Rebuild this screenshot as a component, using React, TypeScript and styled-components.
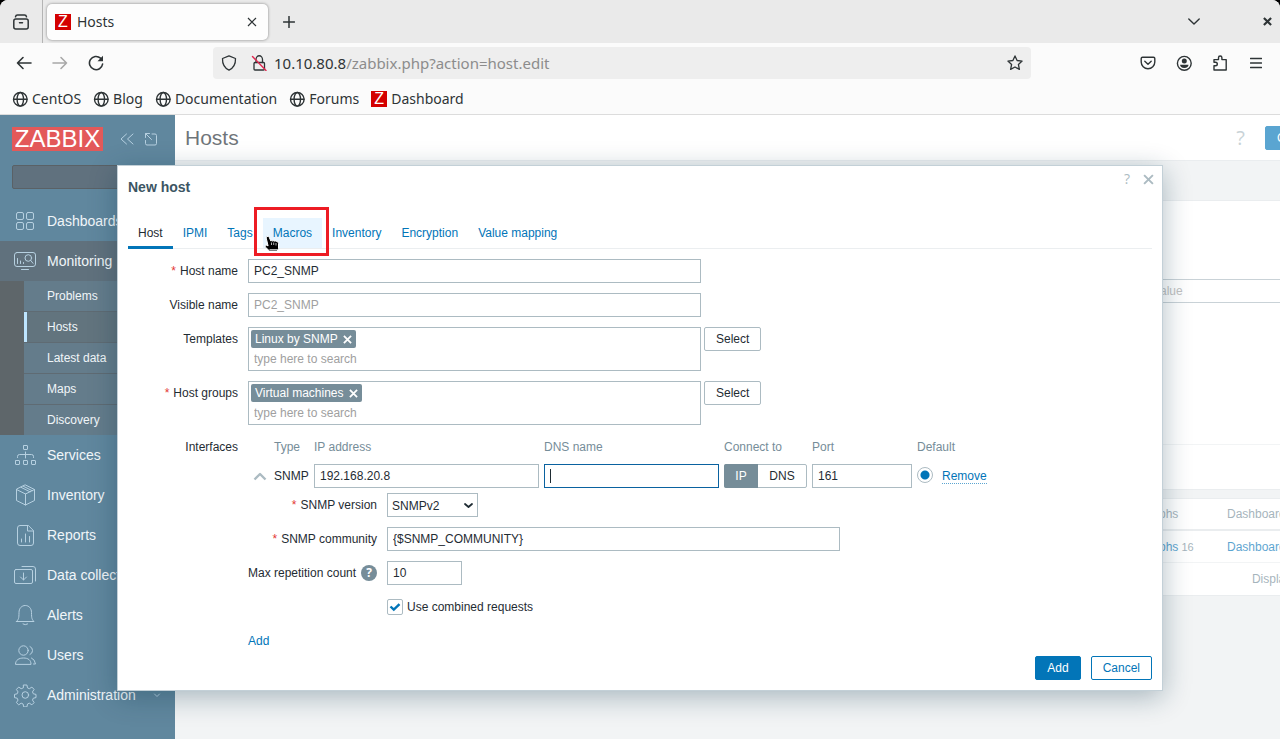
import React from "react";
import styled, { createGlobalStyle, css } from "styled-components";

const GlobalStyle = createGlobalStyle`
  *, *::before, *::after { box-sizing: border-box; }
  body { margin: 0; background: #000; }
  button, input, select { font: inherit; color: inherit; margin: 0; }
  h1, h2, ul, p { margin: 0; padding: 0; }
  ul { list-style: none; }
  a { text-decoration: none; }
`;

/* ---------- browser window ---------- */

const BrowserWindow = styled.div`
  display: flex;
  flex-direction: column;
  min-height: 100vh;
  overflow: hidden;
  border-radius: 8px 8px 0 0;
  background: #fbfbfb;
  color: #2e3436;
  font-family: "Noto Sans", sans-serif;
  font-size: 14px;
`;

const TabStrip = styled.div`
  display: flex;
  align-items: center;
  height: 43px;
  background: #eaeaea;
`;

const StripButton = styled.button<{ $width: number }>`
  display: flex;
  align-items: center;
  justify-content: center;
  flex: none;
  width: ${(p) => p.$width}px;
  height: 32px;
  padding: 0;
  border: 0;
  background: none;
`;

const StripDivider = styled.div`
  width: 1px;
  height: 43px;
  background: #b4b4b4;
`;

const BrowserTab = styled.div`
  display: flex;
  align-items: center;
  gap: 6px;
  width: 221px;
  height: 36px;
  margin: 0 4px;
  padding-left: 8px;
  border-radius: 5px;
  background: #fdfdfd;
  box-shadow: 0 0 3px rgba(0, 0, 0, 0.45);
`;

const TabTitle = styled.span`
  flex: 1;
`;

const Spacer = styled.div`
  flex: 1;
`;

const WindowGap = styled.div`
  width: 40px;
`;

const Favicon = styled.span`
  display: inline-flex;
  align-items: center;
  justify-content: center;
  width: 16px;
  height: 16px;
  background: #d40000;
  color: #fff;
  font: 16px/16px "Liberation Sans", sans-serif;
`;

const Toolbar = styled.div`
  display: flex;
  align-items: center;
  height: 40px;
  padding: 0 6px;
`;

const NavButtons = styled.div`
  display: flex;
  width: 207px;
`;

const AddressBar = styled.div`
  display: flex;
  align-items: center;
  flex: 1;
  height: 32px;
  border-radius: 4px;
  background: #eee;
`;

const Address = styled.div`
  flex: 1;
  padding-left: 2px;
  font-size: 15px;
  color: #8c8c8c;
`;

const AddressHost = styled.span`
  color: #2e3436;
`;

const ToolbarActions = styled.div`
  display: flex;
  justify-content: flex-end;
  width: 243px;
`;

const Bookmarks = styled.nav`
  display: flex;
  align-items: center;
  gap: 12px;
  height: 32px;
  padding: 0 12px;
  border-bottom: 1px solid #dcdcdc;
`;

const Bookmark = styled.a`
  display: flex;
  align-items: center;
  gap: 4px;
  color: #2e3436;
`;

/* ---------- page ---------- */

const Page = styled.div`
  position: relative;
  display: flex;
  flex: 1;
  overflow: hidden;
  background: #ebeef0;
  color: #1f2c33;
  font: 12px/24px "Liberation Sans", Arial, sans-serif;
`;

const Sidebar = styled.aside`
  flex: none;
  width: 175px;
  background: #0c476b;
  color: #fff;
`;

const SidebarHead = styled.div`
  display: flex;
  align-items: center;
  padding: 12px 12px 14px;
`;

const Logo = styled.a`
  flex: none;
  width: 91px;
  height: 24px;
  margin-right: 17px;
  background: #d40000;
  color: #fff;
  font-size: 24px;
  text-align: center;
`;

const HeadIcon = styled.button`
  display: flex;
  flex: none;
  width: 14px;
  height: 14px;
  margin-right: 10px;
  padding: 0;
  border: 0;
  background: none;
  color: #8fb7d0;
`;

const SideSearch = styled.input`
  display: block;
  width: 151px;
  height: 24px;
  margin: 0 12px 12px;
  border: 1px solid #020d14;
  border-radius: 2px;
  background: #0c2639;
`;

const MenuLink = styled.a<{ $open?: boolean }>`
  display: flex;
  align-items: center;
  gap: 10px;
  height: 40px;
  padding: 0 14px;
  background: ${(p) => (p.$open ? "#0c2638" : "none")};
  color: #e9f1f6;
  font-size: 14px;
  white-space: nowrap;
  svg { flex: none; color: #8fb7d0; }
`;

const MenuText = styled.span`
  flex: 1;
`;

const SubMenu = styled.ul`
  display: flex;
  flex-direction: column;
  gap: 1px;
  padding-left: 24px;
  background: linear-gradient(to right, #09151b 24px, #0a1d29 24px);
`;

const SubLink = styled.a<{ $active?: boolean }>`
  display: block;
  height: 30px;
  padding-left: 20px;
  border-left: 3px solid ${(p) => (p.$active ? "#9bd8ff" : "#12374d")};
  background: ${(p) => (p.$active ? "#0e2a3a" : "#12374d")};
  color: #e9f1f6;
  line-height: 30px;
`;

const Main = styled.main`
  flex: 1;
  min-width: 0;
  overflow: hidden;
`;

const MainInner = styled.div`
  width: calc(100% + 117px);
`;

const PageHeader = styled.header`
  display: flex;
  align-items: center;
  justify-content: space-between;
  height: 46px;
  padding: 1px 46px 0 10px;
  border-bottom: 1px solid #dfe4e7;
  background: #fff;
`;

const PageTitle = styled.h1`
  font-size: 21px;
  font-weight: 400;
`;

const HeaderActions = styled.div`
  display: flex;
  align-items: center;
  gap: 20px;
`;

const HelpGlyph = styled.a<{ $size: number }>`
  color: #acbbc2;
  font-family: "Open Sans", sans-serif;
  font-size: ${(p) => p.$size}px;
`;

const FilterPanel = styled.section`
  height: 290px;
  margin-top: 39px;
  border: 1px solid #dfe4e7;
  background: #fff;
`;

const FilterFields = styled.div`
  display: flex;
  justify-content: flex-end;
  height: 244px;
  padding: 78px 7px 0 0;
  border-bottom: 1px solid #ebeef0;
`;

const FilterInput = styled.input`
  width: 240px;
  height: 24px;
  padding: 0 4px;
  border: 1px solid #acbbc2;
  &::placeholder { color: #a0a0a0; opacity: 1; }
`;

const ListPanel = styled.section`
  margin: 8px 9px 0 10px;
  border: 1px solid #dfe4e7;
  background: #fff;
`;

const HostTable = styled.table`
  width: 100%;
  border-collapse: separate;
  border-spacing: 0;
  table-layout: fixed;
  th, td { height: 32px; padding: 0; text-align: left; font-weight: 400; }
  th { color: #768d99; border-bottom: 2px solid #dfe4e7; }
  td { color: #768d99; border-bottom: 1px solid #ebeef0; font-size: 11px; }
  td a { color: #0275b8; font-size: 12px; }
`;

const ListFooter = styled.p`
  padding: 4px 13px;
  color: #768d99;
  text-align: right;
`;

/* ---------- dialog ---------- */

const Overlay = styled.div`
  position: absolute;
  inset: 0;
  padding: 50px 117px 0;
  background: rgba(255, 255, 255, 0.35);
`;

const Dialog = styled.div`
  position: relative;
  padding: 11px 10px 10px;
  border: 1px solid #c3d0d7;
  background: #fff;
  box-shadow: 0 6px 26px rgba(10, 50, 70, 0.32);
`;

const DialogTitle = styled.h2`
  margin-bottom: 21px;
  color: #3c5563;
  font-size: 14px;
  line-height: 20px;
`;

const DialogCorner = styled.div`
  position: absolute;
  top: 1px;
  right: 8px;
  display: flex;
  align-items: center;
  gap: 13px;
`;

const IconButton = styled.button`
  display: flex;
  padding: 0;
  border: 0;
  background: none;
  color: inherit;
`;

const CloseButton = styled(IconButton)`
  color: #acbbc2;
`;

const Tabs = styled.div`
  display: flex;
  height: 31px;
  border-bottom: 1px solid #ebeef0;
`;

const Tab = styled.button<{ $state?: "active" | "hover" }>`
  position: relative;
  height: 30px;
  padding: 0 10px;
  border: 0;
  background: ${(p) => (p.$state === "hover" ? "#e8f5ff" : "none")};
  color: #0275b8;
  ${(p) =>
    p.$state === "active" &&
    css`
      height: 31px;
      padding-bottom: 1px;
      box-shadow: inset 0 -3px #0275b8;
      color: #1f2c33;
    `}
`;

const Highlight = styled.span`
  position: absolute;
  inset: -11px -7px -8px -9px;
  border: 3px solid #ed1c24;
  pointer-events: none;
`;

const Pointer = styled.svg`
  position: absolute;
  left: 1px;
  top: 17px;
`;

const Form = styled.form`
  display: grid;
  grid-template-columns: 110px 1fr;
  gap: 10px;
  padding-top: 10px;
`;

const Label = styled.label<{ $required?: boolean }>`
  text-align: right;
  white-space: nowrap;
  ${(p) =>
    p.$required &&
    css`
      &::before { content: "*"; margin-right: 4px; color: #e33734; }
    `}
`;

const TextInput = styled.input<{ $width?: number; $focused?: boolean }>`
  width: ${(p) => (p.$width ? `${p.$width}px` : "100%")};
  height: 24px;
  padding: 0 5px;
  border: 1px solid ${(p) => (p.$focused ? "#0a62a0" : "#acbbc2")};
  border-radius: 0;
  outline: 0;
  background: #fff;
  &::placeholder { color: #a0a0a0; opacity: 1; }
`;

const FieldLine = styled.div`
  display: flex;
  align-items: flex-start;
  gap: 3px;
`;

const MultiSelect = styled.div`
  width: 453px;
  height: 44px;
  padding: 2px;
  border: 1px solid #acbbc2;
`;

const Chip = styled.span`
  display: flex;
  align-items: center;
  gap: 5px;
  width: max-content;
  height: 18px;
  margin-bottom: 1px;
  padding: 0 4px;
  border-radius: 2px;
  background: #768d99;
  color: #fff;
`;

const ChipInput = styled.input`
  display: block;
  width: 100%;
  height: 20px;
  padding: 0 3px;
  border: 0;
  outline: 0;
  background: none;
  &::placeholder { color: #a0a0a0; opacity: 1; }
`;

const Button = styled.button<{ $kind?: "primary" | "outline" }>`
  height: 24px;
  padding: 0 11px;
  border: 1px solid ${(p) => (p.$kind ? "#0275b8" : "#acbbc2")};
  border-radius: 2px;
  background: ${(p) => (p.$kind === "primary" ? "#0275b8" : "#fff")};
  color: ${(p) => (p.$kind === "primary" ? "#fff" : p.$kind ? "#0275b8" : "#1f2c33")};
  line-height: 22px;
`;

const Interfaces = styled.div`
  display: grid;
  grid-template-columns: 21px 35px 225px 175px 83px 100px 20px 1fr;
  gap: 5px;
`;

const ColumnHead = styled.span<{ $from?: number; $span?: number }>`
  grid-column: ${(p) => p.$from ?? "auto"} / span ${(p) => p.$span ?? 1};
  color: #768d99;
  white-space: nowrap;
`;

const Toggle = styled(IconButton)`
  align-items: center;
  justify-content: center;
  padding-left: 2px;
  color: #acbbc2;
`;

const CaretField = styled.div`
  position: relative;
  height: 24px;
`;

const Caret = styled.span`
  position: absolute;
  left: 6px;
  top: 5px;
  width: 1px;
  height: 14px;
  background: #1f2c33;
`;

const Segmented = styled.div`
  display: flex;
  height: 24px;
  border: 1px solid #acbbc2;
  border-radius: 2px;
  line-height: 22px;
`;

const Segment = styled.label`
  flex: auto;
  text-align: center;
  input { position: absolute; opacity: 0; pointer-events: none; }
  &:has(input:checked) {
    margin: -1px 0 -1px -1px;
    border-radius: 2px 0 0 2px;
    background: #768d99;
    color: #fff;
    line-height: 24px;
  }
`;

const Radio = styled.input`
  width: 16px;
  height: 16px;
  margin-top: 3px;
  border: 1px solid #acbbc2;
  border-radius: 50%;
  appearance: none;
  background: radial-gradient(circle, #0275b8 4px, #fff 5px);
`;

const LinkButton = styled.button<{ $dotted?: boolean }>`
  justify-self: start;
  align-self: center;
  height: ${(p) => (p.$dotted ? 16 : 24)}px;
  padding: ${(p) => (p.$dotted ? "1px 0 0" : "0")};
  border: 0;
  border-bottom: ${(p) => (p.$dotted ? "1px dotted #5ba5d1" : "0")};
  background: none;
  color: #0275b8;
  line-height: 14px;
`;

const Details = styled.div`
  display: grid;
  grid-column: 1 / -1;
  grid-template-columns: 129px 1fr;
  gap: 10px;
`;

const HelpLabel = styled.div`
  display: flex;
  align-items: center;
  justify-content: flex-end;
  gap: 5px;
`;

const HelpBadge = styled.button`
  width: 16px;
  height: 16px;
  padding: 0;
  border: 0;
  border-radius: 50%;
  background: #768d99;
  color: #fff;
  font: bold 12px/16px "Open Sans", sans-serif;
`;

const SelectWrap = styled.div`
  position: relative;
  width: 91px;
  height: 24px;
  svg { position: absolute; right: 5px; top: 8px; pointer-events: none; }
`;

const Select = styled.select`
  display: block;
  width: 100%;
  height: 24px;
  padding: 0 4px 2px;
  border: 1px solid #acbbc2;
  border-radius: 0;
  appearance: none;
  background: #fff;
`;

const CheckLabel = styled.label`
  position: relative;
  grid-column: 2;
  display: flex;
  align-items: center;
  gap: 4px;
  svg { position: absolute; left: 2px; top: 6px; pointer-events: none; }
`;

const Checkbox = styled.input`
  width: 16px;
  height: 16px;
  border: 1px solid #acbbc2;
  border-radius: 2px;
  appearance: none;
  background: #fff;
`;

const DialogFooter = styled.footer`
  display: flex;
  justify-content: flex-end;
  gap: 10px;
  margin-top: 3px;
`;

/* ---------- icons ---------- */

type IconProps = { size?: number; width?: number; box?: string; children: React.ReactNode };

const Icon = ({ size = 16, width = 1, box, children }: IconProps) => (
  <svg
    width={size}
    height={size}
    viewBox={box ?? `0 0 ${size} ${size}`}
    fill="none"
    stroke="currentColor"
    strokeWidth={width}
    strokeLinecap="round"
    strokeLinejoin="round"
    aria-hidden="true"
  >
    {children}
  </svg>
);

const Globe = () => (
  <Icon width={1.4}>
    <circle cx="8.300" cy="8.300" r="6.800" />
    <ellipse cx="8.300" cy="8.300" rx="3.200" ry="6.800" />
    <path d="M1.700 8.300h13.200" />
  </Icon>
);

const Cross = ({ size, width }: { size: number; width: number }) => (
  <Icon size={size} width={width} box="0 0 10 10">
    <path d="M1 1l8 8M9 1L1 9" strokeLinecap="butt" />
  </Icon>
);

const menuIcons: Record<string, React.ReactNode> = {
  Dashboards: (
    <>
      <rect x="2.5" y="2.5" width="7" height="7" rx="1.5" />
      <rect x="12.5" y="2.5" width="7" height="7" rx="1.5" />
      <rect x="2.5" y="12.5" width="7" height="7" rx="1.5" />
      <rect x="12.5" y="12.5" width="7" height="7" rx="1.5" />
    </>
  ),
  Monitoring: (
    <>
      <rect x="0.5" y="2.5" width="21" height="14" rx="2.5" />
      <path d="M7.5 19.5h7M3.500 8.500v5M6.500 11v2.500M9.500 12.500v1M16.800 10.500l2.200 2.800" />
      <circle cx="14.300" cy="8" r="3.300" />
    </>
  ),
  Services: (
    <>
      <rect x="9.5" y="1.5" width="4" height="4" rx=".5" />
      <rect x="1.5" y="16.5" width="4" height="4" rx=".5" />
      <rect x="9.5" y="16.5" width="4" height="4" rx=".5" />
      <rect x="17.5" y="16.5" width="4" height="4" rx=".5" />
      <path d="M11.5 8v6M3.500 13.500v-1q0-2 2-2h12q2 0 2 2v1" />
    </>
  ),
  Inventory: (
    <path d="M11.500 1l9 4.500v11l-9 4.500-9-4.500v-11zM2.500 5.500l9 4.500 9-4.500M11.500 10v11M7 3.300l9 4.500M9.200 2.200l9 4.500" />
  ),
  Reports: (
    <path d="M14 1.500H6q-2.500 0-2.500 2.500v15q0 2.500 2.500 2.500h11q2.500 0 2.500-2.500V7zM13.500 1.500V7h6M7.500 15v3M11.500 10v8M15.500 12.500v5.500" />
  ),
  "Data collection": (
    <>
      <rect x=".5" y="5.5" width="18" height="14" rx="1.5" />
      <path d="M8 2.500h11q2.500 0 2.500 2.500v12M9.500 9v7M6.500 13l3 3 3-3" />
    </>
  ),
  Alerts: (
    <path d="M2.500 17.500h17.500c-2-2-2.500-3-2.500-9 0-4-2.500-7-6.200-7s-6.300 3-6.300 7c0 6-.5 7-2.500 9zM9 20q2.300 1.500 4.600 0" />
  ),
  Users: (
    <>
      <circle cx="9.500" cy="6.500" r="4.700" />
      <path d="M1.500 20c0-4 3.500-6 8-6s7.500 2 7.500 6zM16 2.500q2.500 1 2.500 4t-2.500 4M17.500 14q3.500 1.500 4 6h-2" />
    </>
  ),
  Administration: (
    <>
      <circle cx="11.300" cy="11" r="3.300" />
      <path d="M9.700 1h3.200l.6 2.900 1.800 .8 2.600-1.600 2.200 2.300-1.600 2.500 .8 1.900 2.700 .6v3.200l-2.700 .6-.8 1.900 1.600 2.500-2.200 2.200-2.600-1.600-1.800 .8-.6 2.900H9.700l-.6-2.900-1.900-.8-2.500 1.600-2.300-2.200L4 16.100l-.8-1.900-2.700-.6v-3.200l2.700-.6L4 7.900 2.400 5.400l2.300-2.300 2.500 1.600 1.900-.8z" />
    </>
  ),
};

const MenuItem = ({ name, open, arrow }: { name: string; open?: boolean; arrow?: boolean }) => (
  <MenuLink href="#" $open={open}>
    <Icon size={23} box="0 0 23 23">{menuIcons[name]}</Icon>
    <MenuText>{name}</MenuText>
    {arrow && (
      <Icon size={8}>
        <path d="M1.500 3L4 5.500 6.500 3" />
      </Icon>
    )}
  </MenuLink>
);

const TokenField = ({ id, label, token, required }: { id: string; label: string; token: string; required?: boolean }) => (
  <>
    <Label htmlFor={id} $required={required}>{label}</Label>
    <FieldLine>
      <MultiSelect>
        <Chip>
          {token}
          <IconButton type="button" aria-label={`Remove ${token}`}>
            <Cross size={9} width={2} />
          </IconButton>
        </Chip>
        <ChipInput id={id} placeholder="type here to search" />
      </MultiSelect>
      <Button type="button">Select</Button>
    </FieldLine>
  </>
);

/* ---------- sections ---------- */

const BrowserChrome = () => (
  <>
    <TabStrip>
      <StripButton $width={42} aria-label="Recent browsing">
        <Icon width={1.5}>
          <rect x=".8" y="5" width="14.4" height="10" rx="2" />
          <path d="M2.500 2.800q.3-1.700 2-1.700h7q1.700 0 2 1.700M6.500 8.700h3" />
        </Icon>
      </StripButton>
      <StripDivider />
      <BrowserTab>
        <Favicon>Z</Favicon>
        <TabTitle>Hosts</TabTitle>
        <StripButton $width={32} aria-label="Close tab">
          <Cross size={10} width={1.2} />
        </StripButton>
      </BrowserTab>
      <StripButton $width={34} aria-label="New tab">
        <Icon size={12} width={1.5}>
          <path d="M6 .5v11M.5 6h11" />
        </Icon>
      </StripButton>
      <Spacer />
      <StripButton $width={40} aria-label="List all tabs">
        <Icon size={12} width={1.4}>
          <path d="M.8 3L6 8l5.200-5" />
        </Icon>
      </StripButton>
      <WindowGap />
      <StripButton $width={26} aria-label="Close window">
        <Cross size={9} width={2.4} />
      </StripButton>
    </TabStrip>
    <Toolbar>
      <NavButtons>
        <StripButton $width={36} aria-label="Back">
          <Icon width={1.6}>
            <path d="M15 8H1.500M7 2.500L1.500 8 7 13.500" />
          </Icon>
        </StripButton>
        <StripButton $width={36} aria-label="Forward" disabled>
          <Icon width={1.6}>
            <path d="M1 8h13.500M9 2.500L14.500 8 9 13.500" stroke="#a8a8a8" />
          </Icon>
        </StripButton>
        <StripButton $width={36} aria-label="Reload">
          <Icon width={1.6}>
            <path d="M14.600 9A6.600 6.600 0 1 1 12.500 3.200" />
            <path d="M15 .8v5.500H9.500z" fill="currentColor" stroke="none" />
          </Icon>
        </StripButton>
      </NavButtons>
      <AddressBar>
        <StripButton $width={32} aria-label="Tracking protection">
          <Icon width={1.3}>
            <path d="M8 .8l6.500 2.700c.2 5-1.500 9.200-6.500 11.700C3 12.700 1.300 8.500 1.500 3.500z" />
          </Icon>
        </StripButton>
        <StripButton $width={27} aria-label="Connection is not secure">
          <Icon width={1.3}>
            <rect x="3" y="7.5" width="10.5" height="7.5" rx="1" />
            <path d="M5 7.500V4.500a3.200 3.700 0 0 1 6.500 0v3" />
            <path d="M1.500 1.500l13.500 14" stroke="#e22850" strokeWidth="1.4" />
          </Icon>
        </StripButton>
        <Address>
          <AddressHost>10.10.80.8</AddressHost>/zabbix.php?action=host.edit
        </Address>
        <StripButton $width={32} aria-label="Bookmark this page">
          <Icon width={1.3}>
            <path d="M8 .9l2.100 4.600 5 .6-3.700 3.400 1 4.900L8 12l-4.400 2.400 1-4.900L.9 6.100l5-.6z" />
          </Icon>
        </StripButton>
      </AddressBar>
      <ToolbarActions>
        <StripButton $width={36} aria-label="Pocket">
          <Icon width={1.4}>
            <path d="M2.500 2.200h11q1.300 0 1.300 1.300V7a6.800 6.800 0 0 1-13.600 0V3.500q0-1.300 1.300-1.300zM4.800 6.300L8 9.300l3.200-3" />
          </Icon>
        </StripButton>
        <StripButton $width={36} aria-label="Account">
          <Icon width={1.4}>
            <circle cx="8.3" cy="8.3" r="6.9" />
            <circle cx="8.3" cy="6" r="2.5" fill="currentColor" stroke="none" />
            <path d="M4.100 9.800h8.400q0 3-4.200 3.200-4.200-.2-4.200-3.200z" fill="currentColor" stroke="none" />
          </Icon>
        </StripButton>
        <StripButton $width={36} aria-label="Extensions">
          <Icon width={1.4}>
            <path d="M2 15v-4.200h1.500a1.700 1.700 0 0 0 0-3.600H2V4.600h4.500V2.700a1.700 1.700 0 0 1 3.400 0v1.900h4.300V15z" />
          </Icon>
        </StripButton>
        <StripButton $width={36} aria-label="Open menu">
          <Icon size={12} width={1.3}>
            <path d="M.5 1.500h11M.5 6h11M.5 10.500h11" />
          </Icon>
        </StripButton>
      </ToolbarActions>
    </Toolbar>
    <Bookmarks>
      {["CentOS", "Blog", "Documentation", "Forums"].map((name) => (
        <Bookmark href="#" key={name}>
          <Globe />
          {name}
        </Bookmark>
      ))}
      <Bookmark href="#">
        <Favicon>Z</Favicon>
        Dashboard
      </Bookmark>
    </Bookmarks>
  </>
);

const SideNav = () => (
  <Sidebar>
    <SidebarHead>
      <Logo href="#">ZABBIX</Logo>
      <HeadIcon aria-label="Collapse sidebar">
        <Icon size={14}>
          <path d="M6.500 2L1 7l5.500 5M13 2L7.500 7l5.500 5" />
        </Icon>
      </HeadIcon>
      <HeadIcon aria-label="Hide sidebar">
        <Icon size={14}>
          <path d="M1.500 8.500v3q0 1.500 1.500 1.500h8q1.500 0 1.500-1.500v-8q0-1.500-1.500-1.500H8M1.500 5.500v-4h4M1.500 1.500l6 6" />
        </Icon>
      </HeadIcon>
    </SidebarHead>
    <SideSearch aria-label="Search" />
    <nav>
      <MenuItem name="Dashboards" />
      <MenuItem name="Monitoring" open />
      <SubMenu>
        {["Problems", "Hosts", "Latest data", "Maps", "Discovery"].map((name) => (
          <li key={name}>
            <SubLink href="#" $active={name === "Hosts"}>{name}</SubLink>
          </li>
        ))}
      </SubMenu>
      {["Services", "Inventory", "Reports", "Data collection", "Alerts", "Users"].map((name) => (
        <MenuItem key={name} name={name} />
      ))}
      <MenuItem name="Administration" arrow />
    </nav>
  </Sidebar>
);

const HostsPage = () => (
  <Main>
    <MainInner>
      <PageHeader>
        <PageTitle>Hosts</PageTitle>
        <HeaderActions>
          <HelpGlyph href="#" $size={20}>?</HelpGlyph>
          <Button $kind="primary">Create host</Button>
        </HeaderActions>
      </PageHeader>
      <FilterPanel>
        <FilterFields>
          <FilterInput placeholder="value" aria-label="Tag value" />
        </FilterFields>
      </FilterPanel>
      <ListPanel>
        <HostTable>
          <colgroup>
            <col />
            <col width="88" />
            <col width="160" />
          </colgroup>
          <thead>
            <tr>
              <th />
              <th>Graphs</th>
              <th>Dashboards</th>
            </tr>
          </thead>
          <tbody>
            <tr>
              <td />
              <td><a href="#">Graphs</a> 16</td>
              <td><a href="#">Dashboards</a></td>
            </tr>
          </tbody>
        </HostTable>
        <ListFooter>Displaying 1 of 1 found</ListFooter>
      </ListPanel>
    </MainInner>
  </Main>
);

const HandPointer = () => (
  <Pointer width="18" height="18" viewBox="0 0 18 18" aria-hidden="true">
    <path
      d="M3 1.500q1.600-.8 2.300 1L6.800 6q1-.9 2 .1 1-.9 2 .1 1-.7 1.900 .4 1.800-.4 1.800 1.800v5L13.300 16H5.500L1.300 12q-1-1.500 .7-2.100l2.100 1L2.200 3q-.2-1.200 .8-1.500z"
      fill="#000"
      stroke="#fff"
      strokeWidth="1"
    />
    <path d="M7.500 7.500v2.500M9.700 7.500v2.500M12 8v2.500M5.500 14.500h8" stroke="#fff" strokeWidth=".7" />
  </Pointer>
);

const tabNames = ["Host", "IPMI", "Tags", "Macros", "Inventory", "Encryption", "Value mapping"];

const NewHostDialog = () => (
  <Overlay>
    <Dialog role="dialog" aria-labelledby="dialog-title">
      <DialogCorner>
        <HelpGlyph href="#" $size={14}>?</HelpGlyph>
        <CloseButton aria-label="Close">
          <Cross size={11} width={1.8} />
        </CloseButton>
      </DialogCorner>
      <DialogTitle id="dialog-title">New host</DialogTitle>
      <Tabs role="tablist">
        {tabNames.map((name) => (
          <Tab
            key={name}
            role="tab"
            aria-selected={name === "Host"}
            $state={name === "Host" ? "active" : name === "Macros" ? "hover" : undefined}
          >
            {name}
            {name === "Macros" && (
              <>
                <Highlight />
                <HandPointer />
              </>
            )}
          </Tab>
        ))}
      </Tabs>
      <Form>
        <Label htmlFor="host-name" $required>Host name</Label>
        <TextInput id="host-name" defaultValue="PC2_SNMP" $width={453} />
        <Label htmlFor="visible-name">Visible name</Label>
        <TextInput id="visible-name" placeholder="PC2_SNMP" $width={453} />
        <TokenField id="templates" label="Templates" token="Linux by SNMP" />
        <TokenField id="groups" label="Host groups" token="Virtual machines" required />
        <Label as="span">Interfaces</Label>
        <div>
          <Interfaces>
            <ColumnHead $from={2}>Type</ColumnHead>
            <ColumnHead>IP address</ColumnHead>
            <ColumnHead>DNS name</ColumnHead>
            <ColumnHead>Connect to</ColumnHead>
            <ColumnHead>Port</ColumnHead>
            <ColumnHead $span={2}>Default</ColumnHead>

            <Toggle type="button" aria-label="Collapse interface">
              <Icon size={14} width={2.4}>
                <path d="M1.500 10.500L7 5l5.500 5.500" strokeLinecap="butt" />
              </Icon>
            </Toggle>
            <span>SNMP</span>
            <TextInput aria-label="IP address" defaultValue="192.168.20.8" />
            <CaretField>
              <TextInput aria-label="DNS name" $focused />
              <Caret />
            </CaretField>
            <Segmented>
              <Segment><input type="radio" name="connect" defaultChecked />IP</Segment>
              <Segment><input type="radio" name="connect" />DNS</Segment>
            </Segmented>
            <TextInput aria-label="Port" defaultValue="161" />
            <Radio type="radio" name="default" aria-label="Default" defaultChecked />
            <LinkButton type="button" $dotted>Remove</LinkButton>

            <Details>
              <Label htmlFor="version" $required>SNMP version</Label>
              <SelectWrap>
                <Select id="version" defaultValue="SNMPv2">
                  <option>SNMPv1</option>
                  <option>SNMPv2</option>
                  <option>SNMPv3</option>
                </Select>
                <Icon size={9} width={1.8}>
                  <path d="M1 3l3.500 3L8 3" />
                </Icon>
              </SelectWrap>
              <Label htmlFor="community" $required>SNMP community</Label>
              <TextInput id="community" defaultValue="{$SNMP_COMMUNITY}" $width={453} />
              <HelpLabel>
                <Label htmlFor="repetition">Max repetition count</Label>
                <HelpBadge type="button" aria-label="Help">?</HelpBadge>
              </HelpLabel>
              <TextInput id="repetition" defaultValue="10" $width={75} />
              <CheckLabel>
                <Checkbox type="checkbox" defaultChecked />
                <Icon size={12} width={2.4}>
                  <path d="M1.500 5.500l3.300 3.200 5.700-5.500" stroke="#0275b8" strokeLinecap="butt" strokeLinejoin="miter" />
                </Icon>
                Use combined requests
              </CheckLabel>
              <LinkButton type="button">Add</LinkButton>
            </Details>
          </Interfaces>
        </div>
      </Form>
      <DialogFooter>
        <Button $kind="primary">Add</Button>
        <Button $kind="outline">Cancel</Button>
      </DialogFooter>
    </Dialog>
  </Overlay>
);

const App = () => (
  <BrowserWindow>
    <GlobalStyle />
    <BrowserChrome />
    <Page>
      <SideNav />
      <HostsPage />
      <NewHostDialog />
    </Page>
  </BrowserWindow>
);

export default App;
